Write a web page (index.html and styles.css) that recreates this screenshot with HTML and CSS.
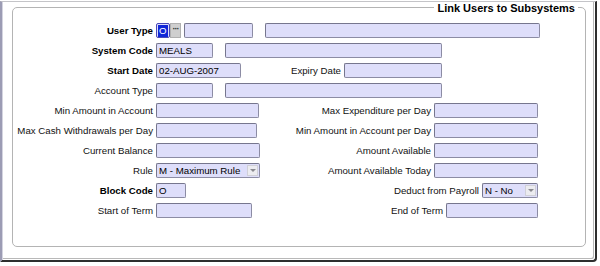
FILE: index.html
```html
<!DOCTYPE html>
<html>
<head>
<meta charset="utf-8">
<link rel="stylesheet" href="styles.css">
</head>
<body>
<div class="frame">
  <div class="panel">
    <div class="legend">Link Users to Subsystems</div>
    <div class="rows">
      <div class="row">
        <span class="lbl b">User Type</span>
        <span class="inp focus w14"><span class="hl">O</span></span>
        <span class="btn">&middot;&middot;&middot;</span>
        <span class="inp w69 ml2"></span>
        <span class="inp w275 ml12"></span>
      </div>
      <div class="row">
        <span class="lbl b">System Code</span>
        <span class="inp w57">MEALS</span>
        <span class="inp w217 ml12"></span>
      </div>
      <div class="row">
        <span class="lbl b">Start Date</span>
        <span class="inp w85">02-AUG-2007</span>
        <div class="right mid">
          <span class="rlbl">Expiry Date</span>
          <span class="inp w98"></span>
        </div>
      </div>
      <div class="row">
        <span class="lbl">Account Type</span>
        <span class="inp w57"></span>
        <span class="inp w217 ml12"></span>
      </div>
      <div class="row">
        <span class="lbl">Min Amount in Account</span>
        <span class="inp w103"></span>
        <div class="right">
          <span class="rlbl">Max Expenditure per Day</span>
          <span class="inp w104"></span>
        </div>
      </div>
      <div class="row">
        <span class="lbl">Max Cash Withdrawals per Day</span>
        <span class="inp w101"></span>
        <div class="right">
          <span class="rlbl">Min Amount in Account per Day</span>
          <span class="inp w104"></span>
        </div>
      </div>
      <div class="row">
        <span class="lbl">Current Balance</span>
        <span class="inp w104"></span>
        <div class="right">
          <span class="rlbl">Amount Available</span>
          <span class="inp w104"></span>
        </div>
      </div>
      <div class="row">
        <span class="lbl">Rule</span>
        <span class="inp select w104">M - Maximum Rule<span class="arrow"></span></span>
        <div class="right">
          <span class="rlbl">Amount Available Today</span>
          <span class="inp w104"></span>
        </div>
      </div>
      <div class="row">
        <span class="lbl b">Block Code</span>
        <span class="inp w30">O</span>
        <div class="right">
          <span class="rlbl">Deduct from Payroll</span>
          <span class="inp select w56">N - No<span class="arrow"></span></span>
        </div>
      </div>
      <div class="row">
        <span class="lbl">Start of Term</span>
        <span class="inp w96"></span>
        <div class="right">
          <span class="rlbl">End of Term</span>
          <span class="inp w92"></span>
        </div>
      </div>
    </div>
  </div>
</div>
</body>
</html>
```

FILE: styles.css
```css
* { box-sizing: border-box; }
html, body { margin: 0; padding: 0; background: #fff; }
body {
  font-family: "Liberation Sans", Arial, sans-serif;
  font-size: 9.7px;
  color: #111;
  width: 600px;
  height: 266px;
  overflow: hidden;
}
.frame {
  width: 597px;
  height: 261px;
  margin-top: 1px;
  border-top: 1px solid #c4c4c8;
  border-left: 2px solid #9c9cb4;
  border-right: 2px solid #2e2e2e;
  border-bottom: 2px solid #2e2e2e;
  border-bottom-right-radius: 4px;
  box-shadow: inset 1px 0 0 #d4d4e0, inset -1px -1px 0 #fff, inset -2px -2px 0 #b8b8b8;
  padding-top: 5px;
  padding-left: 10px;
}
.panel {
  position: relative;
  width: 574px;
  height: 240px;
  border: 1px solid #b4b4b4;
  border-radius: 5px;
}
.legend {
  position: absolute;
  right: 7px;
  top: -6px;
  background: #fff;
  padding: 0 3px;
  font-weight: bold;
  font-size: 11px;
  line-height: 13px;
  color: #000;
}
.rows { padding-top: 13px; }
.row {
  display: flex;
  align-items: flex-start;
  height: 20px;
}
.lbl {
  width: 140px;
  margin-right: 3px;
  text-align: right;
  line-height: 15px;
  margin-top: 2px;
  white-space: nowrap;
}
.b { font-weight: bold; color: #000; }
.rlbl {
  line-height: 15px;
  margin-top: 2px;
  margin-right: 3px;
  white-space: nowrap;
}
.right {
  display: flex;
  align-items: flex-start;
  margin-left: auto;
  margin-right: 47px;
}
.right.mid { margin-right: 143px; }
.inp {
  display: block;
  height: 15px;
  margin-top: 2px;
  background: #dedefa;
  border: 1px solid #8c8ca4;
  border-top-color: #76768e;
  border-left-color: #76768e;
  border-radius: 2px;
  padding: 0 0 0 2px;
  line-height: 13px;
  white-space: nowrap;
  overflow: hidden;
  color: #000;
}
.focus { border-color: #4a4ab8; padding-left: 1px; }
.hl {
  display: inline-block;
  background: #1026d8;
  color: #fff;
  line-height: 12px;
  padding: 0 1px;
}
.btn {
  display: block;
  width: 11px;
  height: 15px;
  margin-top: 2px;
  background: #cfcfcf;
  border: 1px solid #b0b0b0;
  color: #333;
  font-size: 9px;
  font-weight: bold;
  line-height: 10px;
  text-align: center;
  letter-spacing: -1px;
  overflow: hidden;
}
.select { position: relative; }
.arrow {
  position: absolute;
  right: 1px;
  top: 1px;
  width: 11px;
  height: 11px;
  background: #ececf0;
  border: 1px solid #d0d0d8;
}
.arrow::after {
  content: "";
  position: absolute;
  left: 2px;
  top: 3px;
  border-left: 3px solid transparent;
  border-right: 3px solid transparent;
  border-top: 3px solid #8a8a90;
}
.ml2 { margin-left: 3px; }
.ml12 { margin-left: 12px; }
.w14 { width: 14px; }
.w30 { width: 30px; }
.w56 { width: 56px; }
.w57 { width: 57px; }
.w69 { width: 69px; }
.w85 { width: 85px; }
.w92 { width: 92px; }
.w96 { width: 96px; }
.w98 { width: 98px; }
.w101 { width: 101px; }
.w103 { width: 103px; }
.w104 { width: 104px; }
.w217 { width: 217px; }
.w275 { width: 275px; }
```
